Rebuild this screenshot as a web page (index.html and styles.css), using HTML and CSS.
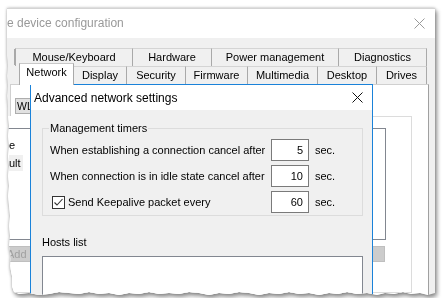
FILE: index.html
```html
<!DOCTYPE html>
<html>
<head>
<meta charset="utf-8">
<link rel="stylesheet" href="styles.css">
</head>
<body>
<div class="shot">
  <div class="win">
    <div class="titlebar">
      <span class="title">e device configuration</span>
      <svg class="xicon" width="11" height="11" viewBox="0 0 11 11"><path d="M0.5 0.5 L10.5 10.5 M10.5 0.5 L0.5 10.5" stroke="#9a9a9a" stroke-width="1" fill="none"/></svg>
    </div>
    <div class="client">
      <div class="tabs">
        <div class="tabrow back">
          <div class="tab w-mk">Mouse/Keyboard</div>
          <div class="tab w-hw">Hardware</div>
          <div class="tab w-pm">Power management</div>
          <div class="tab w-dg">Diagnostics</div>
        </div>
        <div class="tabrow front">
          <div class="tab sel w-net">Network</div>
          <div class="tab w-dsp">Display</div>
          <div class="tab w-sec">Security</div>
          <div class="tab w-fw">Firmware</div>
          <div class="tab w-mm">Multimedia</div>
          <div class="tab w-dt">Desktop</div>
          <div class="tab w-dr">Drives</div>
        </div>
      </div>
      <div class="panel">
        <div class="wl-row"><div class="btn wl">WL</div></div>
        <div class="pgroup">
          <div class="pgroup-edge"></div>
          <div class="plist">
            <div class="pitem">e</div>
            <div class="pitem"><span class="pcell">ult</span></div>
          </div>
          <div class="pbtns">
            <div class="btn dis add">Add</div>
            <div class="btn dis rbtn"></div>
          </div>
        </div>
      </div>
    </div>

    <div class="dialog">
      <div class="dlg-title">
        <span>Advanced network settings</span>
        <svg class="xicon" width="11" height="11" viewBox="0 0 11 11"><path d="M0.5 0.5 L10.5 10.5 M10.5 0.5 L0.5 10.5" stroke="#111" stroke-width="1" fill="none"/></svg>
      </div>
      <div class="dlg-body">
        <div class="group">
          <div class="group-label">Management timers</div>
          <div class="rows">
            <div class="row">
              <span>When establishing a connection cancel after</span>
              <div class="num">5</div>
              <span class="unit">sec.</span>
            </div>
            <div class="row">
              <span>When connection is in idle state cancel after</span>
              <div class="num">10</div>
              <span class="unit">sec.</span>
            </div>
            <div class="row">
              <span class="chk-label">
                <span class="chk"><svg width="11" height="11" viewBox="0 0 11 11"><path d="M1.5 5.5 L4 8 L9.5 2" stroke="#333" stroke-width="1.1" fill="none"/></svg></span>
                Send Keepalive packet every
              </span>
              <div class="num">60</div>
              <span class="unit">sec.</span>
            </div>
          </div>
        </div>
        <div class="hosts-label">Hosts list</div>
        <div class="hosts-list"></div>
      </div>
    </div>
  </div>
</div>
</body>
</html>
```
FILE: styles.css
```css
* { box-sizing: border-box; }
html, body { margin: 0; padding: 0; background: #ffffff; }
body {
  font-family: "Liberation Sans", Arial, sans-serif;
  font-size: 11px;
  color: #000;
  white-space: nowrap;
}
.shot {
  margin: 8px 0 0 7px;
  width: 428px;
  height: 290px;
  filter: drop-shadow(2px 3px 2px rgba(0,0,0,0.35)) drop-shadow(0 0 1.5px rgba(0,0,0,0.3));
}
.win {
  position: relative;
  width: 428px;
  height: 290px;
  overflow: hidden;
  background: #f0f0f0;
  border-top: 1px solid #d4d4d4;
  clip-path: polygon(0 0, 428px 0, 428px 285px, 421px 287px, 413px 285px, 404px 286px, 396px 284px, 387px 286px, 378px 285px, 370px 287px, 360px 285px, 350px 286px, 340px 284px, 331px 286px, 322px 285px, 312px 287px, 302px 285px, 292px 286px, 282px 284px, 272px 286px, 262px 285px, 252px 287px, 242px 285px, 232px 284px, 222px 286px, 212px 285px, 202px 287px, 192px 285px, 182px 284px, 172px 286px, 162px 285px, 152px 286px, 142px 284px, 132px 286px, 122px 285px, 112px 287px, 102px 285px, 92px 286px, 82px 284px, 72px 286px, 62px 285px, 52px 284px, 42px 286px, 32px 287px, 22px 285px, 12px 286px, 7px 284px, 5px 278px, 5px 268px, 3px 258px, 4px 248px, 2px 238px, 3px 228px, 2px 218px, 3px 208px, 2px 198px, 1px 188px, 2px 178px, 1px 168px, 2px 158px, 1px 148px, 2px 138px, 1px 128px, 2px 118px, 1px 108px, 1px 98px, 0 88px, 1px 78px, 0 68px, 1px 58px, 0 48px, 0 0);
}
.titlebar {
  height: 29px;
  background: #fff;
  display: flex;
  align-items: center;
  justify-content: space-between;
  padding: 0 10px 1px 0;
}
.title { color: #999; font-size: 12px; }
.client { padding-top: 10px; }
.tabs { margin-left: 8px; width: 412px; }
.tabrow { display: flex; height: 18px; }
.front { align-items: flex-end; padding-left: 4px; }
.tab {
  height: 18px;
  border-top: 1px solid #d4d4d4;
  background: #f0f0f0;
  display: flex;
  align-items: center;
  justify-content: center;
  padding-bottom: 1px;
  flex: none;
}
.back .tab { border-left: 1px solid #a9a9a9; }
.back .tab:first-child { box-shadow: -2px 0 0 -1px #a9a9a9; }
.back .tab:last-child { border-right: 1px solid #a9a9a9; }
.front .tab { border-right: 1px solid #a9a9a9; }
.front .tab.sel {
  position: relative;
  z-index: 1;
  height: 22px;
  margin-bottom: -1px;
  background: #fff;
  border: 1px solid #a9a9a9;
  border-top-color: #c8c8c8;
  border-bottom: none;
  align-items: flex-start;
  padding-top: 2px;
}
.w-mk { width: 117px; }
.w-hw { width: 79px; }
.w-pm { width: 127px; }
.w-dg { width: 89px; }
.w-net { width: 55px; }
.w-dsp { width: 53px; }
.w-sec { width: 59px; }
.w-fw { width: 62px; }
.w-mm { width: 70px; }
.w-dt { width: 59px; }
.w-dr { width: 50px; }

.panel {
  margin-left: 3px;
  width: 419px;
  height: 220px;
  background: #fff;
  border: 1px solid #d0d0d0;
  border-right-color: #a0a0a0;
}
.wl-row { padding: 13px 0 0 4px; }
.btn {
  height: 16px;
  border: 1px solid #adadad;
  background: #e1e1e1;
  line-height: 14px;
}
.wl { width: 60px; padding-left: 1px; font-size: 10.5px; }
.pgroup {
  margin: 2px 16px 0 -20px;
  height: 177px;
  background: #fff;
  border: 1px solid #dcdcdc;
  border-top: none;
}
.pgroup-edge { height: 1px; margin: 0 -1px 0 240px; background: #dcdcdc; }
.plist {
  margin: 11px 25px 0 0;
  height: 112px;
  border: 1px solid #828790;
  padding: 8px 0 0 16px;
}
.pitem { height: 17px; line-height: 16px; }
.pcell { display: inline-block; background: #f0f0f0; padding: 0 2px 0 0; line-height: 16px; margin-top: 1px; }
.pbtns { display: flex; margin-top: 6px; padding-right: 26px; }
.dis { background: #cccccc; border-color: #bfbfbf; color: #a0a0a0; }
.add { width: 80px; padding-left: 14px; }
.rbtn { width: 70px; margin-left: auto; }

.dialog {
  position: absolute;
  left: 23px;
  top: 75px;
  width: 343px;
  height: 240px;
  background: #f0f0f0;
  border: 1px solid #1a82d9;
}
.dlg-title {
  height: 25px;
  background: #fff;
  display: flex;
  align-items: center;
  justify-content: space-between;
  padding: 0 9px 0 3px;
  font-size: 12px;
}
.dlg-body { padding: 0 9px 0 11px; }
.group {
  margin-top: 18px;
  border: 1px solid #dcdcdc;
  padding: 0 0 2px 7px;
}
.group-label {
  width: fit-content;
  margin: -9px 0 0 -1px;
  padding: 0 1px;
  background: #f0f0f0;
  line-height: 16px;
}
.rows { display: flex; flex-direction: column; gap: 4px; margin-top: 3px; }
.row {
  display: grid;
  grid-template-columns: 221px 38px auto;
  align-items: center;
  height: 22px;
}
.num {
  height: 22px;
  border: 1px solid #7a7a7a;
  background: #fff;
  text-align: right;
  padding-right: 5px;
  line-height: 20px;
}
.unit { margin-left: 6px; }
.chk-label { display: flex; align-items: center; }
.chk {
  width: 13px;
  height: 13px;
  margin: 0 3px 0 2px;
  border: 1px solid #333;
  background: #fff;
  display: flex;
  align-items: center;
  justify-content: center;
}
.chk svg { display: block; }
.hosts-label { margin-top: 18px; line-height: 16px; }
.hosts-list {
  margin-top: 6px;
  height: 80px;
  border: 1px solid #828790;
  background: #fff;
}
.xicon { display: block; }
```
